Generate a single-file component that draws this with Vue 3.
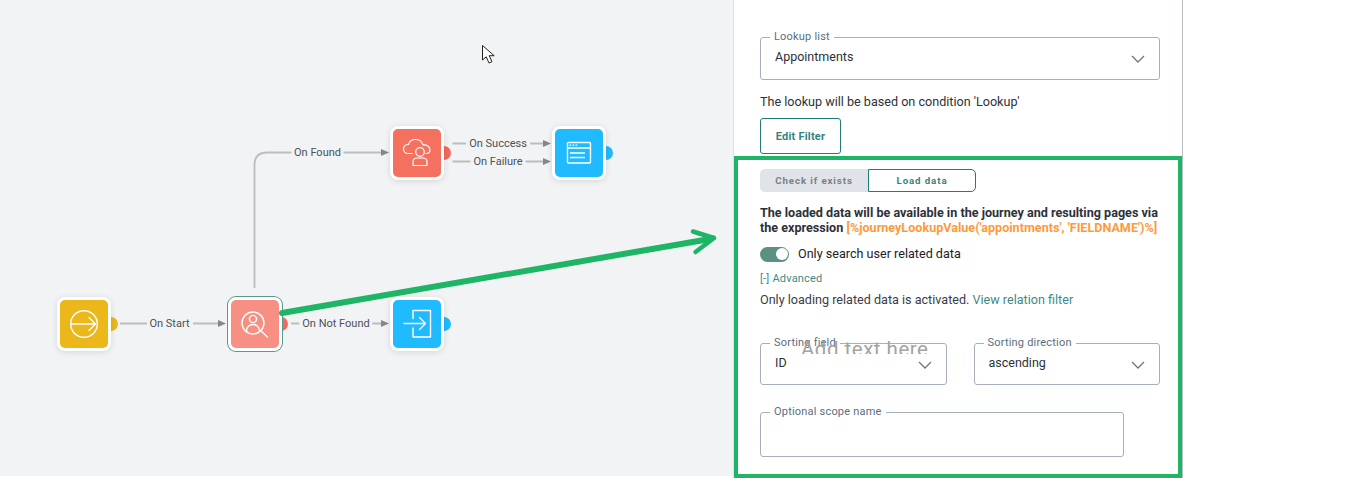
<script setup>
const nodes = [
  { id: 'start', x: 57, y: 297, color: '#ebb71b', dot: '#ebb71b' },
  { id: 'lookup', x: 228, y: 297, color: '#f78f82', dot: '#f4695c', selected: true },
  { id: 'notfound', x: 390, y: 297, color: '#1fbaff', dot: '#1fbaff' },
  { id: 'cloud', x: 390, y: 126, color: '#f4705f', dot: '#f4695c' },
  { id: 'page', x: 552, y: 126, color: '#1fbaff', dot: '#1fbaff' }
]
const labels = [
  { text: 'On Start', x: 169.5, y: 324 },
  { text: 'On Not Found', x: 336, y: 324 },
  { text: 'On Found', x: 317.5, y: 153 },
  { text: 'On Success', x: 498, y: 144 },
  { text: 'On Failure', x: 498, y: 162 }
]
</script>

<template>
  <div class="page">
    <div class="canvas">
      <svg class="wires" width="733" height="476" viewBox="0 0 733 476">
        <g fill="none" stroke="#bcbdbf" stroke-width="1.8">
          <path d="M120 323.500H219" />
          <path d="M254.500 288V165Q254.500 152.500 267 152.500H382" />
          <path d="M291 323.500H382" />
          <path d="M452.500 143.500H544" />
          <path d="M452.500 161.500H544" />
        </g>
        <g fill="#85878a">
          <path d="M218 320l8 3.500l-8 3.500z" />
          <path d="M381 320l8 3.500l-8 3.500z" />
          <path d="M381 149l8 3.500l-8 3.500z" />
          <path d="M543 140l8 3.500l-8 3.500z" />
          <path d="M543 158l8 3.500l-8 3.500z" />
        </g>
      </svg>

      <span
        v-for="l in labels"
        :key="l.text"
        class="wire-label"
        :style="{ left: l.x + 'px', top: l.y + 'px' }"
      >{{ l.text }}</span>

      <div
        v-for="n in nodes"
        :key="n.id"
        class="node"
        :class="{ selected: n.selected }"
        :style="{ left: n.x + 'px', top: n.y + 'px' }"
      >
        <i class="dot" :style="{ background: n.dot }"></i>
        <div class="tile" :style="{ background: n.color }">
          <svg v-if="n.id === 'start'" width="30" height="30" viewBox="0 0 30 30" fill="none" stroke="#fff" stroke-width="1.4" stroke-linecap="round" stroke-linejoin="round">
            <circle cx="15" cy="15" r="13.300" />
            <path d="M1.700 15H26.500M20 8.500l6.500 6.500l-6.500 6.500" />
          </svg>
          <svg v-else-if="n.id === 'lookup'" width="30" height="30" viewBox="0 0 30 30" fill="none" stroke="#fff" stroke-width="1.4" stroke-linecap="round" stroke-linejoin="round">
            <circle cx="13" cy="14" r="11" />
            <circle cx="13" cy="10" r="3.600" />
            <path d="M6.500 22c0-4 3-6.500 6.500-6.500s6.500 2.500 6.500 6.500M21 22L27.500 28" />
          </svg>
          <svg v-else-if="n.id === 'notfound'" width="30" height="30" viewBox="0 0 30 30" fill="none" stroke="#fff" stroke-width="1.4" stroke-linecap="round" stroke-linejoin="round">
            <path d="M11 9.500V1.500H28.500V28H11V19" />
            <path d="M2 14.500H23.500M17.500 8.500l6 6l-6 6" />
          </svg>
          <svg v-else-if="n.id === 'cloud'" width="30" height="30" viewBox="0 0 30 30" fill="none" stroke="#fff" stroke-width="1.2" stroke-linecap="round" stroke-linejoin="round">
            <path d="M10 15.500H6C3 15.500 1.500 13 1.500 11C1.500 8.500 3.500 6.500 6.500 6.500C7.500 3 10.500 1.500 13.500 1.500C17 1.500 20 3.500 21 7C24.500 6.500 28 8.500 28 12C28 14 26.500 15.500 24 15.500" />
            <circle cx="18" cy="14" r="4.300" />
            <path d="M11 27.500V24c0-2.500 2-4 4-4h6c2 0 4 1.500 4 4v3.500z" />
          </svg>
          <svg v-else width="26" height="26" viewBox="0 0 26 26" fill="none" stroke="#fff" stroke-width="1.4">
            <rect x="1.500" y="2.500" width="23" height="20.500" rx="1" />
            <path d="M1.500 8H24.500M4 13H19M4 17.500H19" />
            <path d="M3.500 5.300H5.200M6.500 5.300H8.200M9.500 5.300H11.200" />
          </svg>
        </div>
      </div>

      <svg class="cursor" width="16" height="22" viewBox="0 0 16 22">
        <path d="M1.500 1.500V16l3.700-3.200L8 19l3-1.300l-2.800-6h5z" fill="#fff" stroke="#222" stroke-width="1" stroke-linejoin="round" />
      </svg>
    </div>

    <aside class="panel">
      <div class="field lookup">
        <span class="legend">Lookup list</span>
        <span class="value">Appointments</span>
        <svg class="chev" width="14" height="8" viewBox="0 0 14 8" fill="none" stroke="#70757c" stroke-width="1.300"><path d="M1 1l6 6l6-6" /></svg>
      </div>

      <p class="info">The lookup will be based on condition 'Lookup'</p>
      <button class="edit">Edit Filter</button>

      <div class="segments">
        <span class="seg off">Check if exists</span>
        <span class="seg on">Load data</span>
      </div>

      <p class="notice">The loaded data will be available in the journey and resulting pages via the expression <span class="expr">[%journeyLookupValue('appointments', 'FIELDNAME')%]</span></p>

      <div class="switch-row">
        <span class="switch"><i></i></span>
        <span class="switch-text">Only search user related data</span>
      </div>

      <div class="advanced">[-] Advanced</div>
      <p class="activated">Only loading related data is activated. <span class="link">View relation filter</span></p>

      <div class="sort-row">
        <div class="field">
          <span class="legend">Sorting field</span>
          <span class="value">ID</span>
          <svg class="chev" width="14" height="8" viewBox="0 0 14 8" fill="none" stroke="#70757c" stroke-width="1.300"><path d="M1 1l6 6l6-6" /></svg>
          <span class="ghost">Add text here</span>
        </div>
        <div class="field">
          <span class="legend">Sorting direction</span>
          <span class="value">ascending</span>
          <svg class="chev" width="14" height="8" viewBox="0 0 14 8" fill="none" stroke="#70757c" stroke-width="1.300"><path d="M1 1l6 6l6-6" /></svg>
        </div>
      </div>

      <div class="field scope">
        <span class="legend">Optional scope name</span>
      </div>

      <div class="highlight"></div>
    </aside>

    <svg class="arrow" width="1365" height="478" viewBox="0 0 1365 478">
      <path d="M282 313L710 239" fill="none" stroke="#1eb566" stroke-width="6" stroke-linecap="round" />
      <path d="M714 238L693 231.500M714 238L695.500 252" fill="none" stroke="#1eb566" stroke-width="4.500" stroke-linecap="round" />
    </svg>
  </div>
</template>

<style>
html, body { margin: 0; background: #fff; }
</style>

<style scoped>
.page {
  position: relative;
  display: flex;
  align-items: flex-start;
  width: 1365px;
  height: 478px;
  overflow: hidden;
  font-family: Roboto, "Liberation Sans", sans-serif;
  color: #2e3138;
}
.canvas {
  position: relative;
  isolation: isolate;
  flex: none;
  width: 733px;
  height: 476px;
  background: #f2f3f5;
}
.wires { position: absolute; left: 0; top: 0; }
.wire-label {
  position: absolute;
  transform: translate(-50%, -50%);
  padding: 0 3px;
  background: #f2f3f5;
  font-size: 11px;
  line-height: 14px;
  color: #4b5058;
  white-space: nowrap;
}
.node {
  position: absolute;
  box-sizing: border-box;
  width: 54px;
  height: 54px;
  padding: 3px;
  background: #fff;
  border-radius: 8px;
  box-shadow: 0 1px 6px rgba(0, 0, 0, .13);
}
.node.selected {
  box-shadow: 0 0 0 1px #559a8f;
}
.tile {
  display: flex;
  align-items: center;
  justify-content: center;
  width: 100%;
  height: 100%;
  border-radius: 5px;
}
.dot {
  position: absolute;
  z-index: -1;
  right: -7px;
  top: 20px;
  width: 14px;
  height: 14px;
  border-radius: 50%;
}
.selected .dot { right: -6px; }
.cursor { position: absolute; left: 481px; top: 44px; }

.panel {
  position: relative;
  flex: none;
  box-sizing: border-box;
  width: 450px;
  height: 478px;
  padding: 37px 22px 0 26px;
  background: #fff;
  border-left: 1px solid #dfe1e4;
  border-right: 1px solid #b9bcc1;
}
.field {
  position: relative;
  box-sizing: border-box;
  display: flex;
  align-items: center;
  height: 43px;
  padding: 0 14px 4px;
  border: 1px solid #a9afb9;
  border-radius: 3px;
}
.legend {
  position: absolute;
  left: 9px;
  top: -8px;
  padding: 0 4px;
  background: #fff;
  font-size: 11px;
  line-height: 14px;
  letter-spacing: .2px;
  color: #5b6e7c;
  white-space: nowrap;
}
.value { font-size: 12.500px; color: #2e3138; }
.chev { position: absolute; right: 14px; top: 17px; }
.lookup { margin-bottom: 14px; }
.info {
  margin: 0;
  font-size: 12.600px;
  line-height: 15px;
  color: #2e3138;
}
.edit {
  display: block;
  box-sizing: border-box;
  width: 81px;
  height: 36px;
  margin: 9px 0 15px;
  padding: 0;
  background: #fff;
  border: 1px solid #1f7d71;
  border-radius: 3px;
  font: 700 11px Roboto, sans-serif;
  letter-spacing: .2px;
  color: #37837c;
}
.segments {
  display: flex;
  width: 216px;
  height: 23px;
  background: #e0e3e7;
  border-radius: 5px;
  font-size: 9.700px;
  font-weight: 700;
  letter-spacing: .9px;
}
.seg {
  display: flex;
  align-items: center;
  justify-content: center;
  box-sizing: border-box;
  width: 108px;
}
.off { color: #7a8087; }
.on {
  background: #fff;
  border: 1px solid #1f7d71;
  border-radius: 0 5px 5px 0;
  color: #37837c;
}
.notice {
  margin: 13px 0 0;
  font-size: 12.600px;
  font-weight: 700;
  line-height: 15px;
  color: #2e3138;
}
.expr { color: #ff9a3c; }
.switch-row {
  display: flex;
  align-items: center;
  gap: 9px;
  height: 16px;
  margin-top: 11px;
}
.switch {
  position: relative;
  width: 29px;
  height: 15px;
  border-radius: 8px;
  background: #5a9183;
}
.switch i {
  position: absolute;
  right: 1.500px;
  top: 1.500px;
  width: 12px;
  height: 12px;
  border-radius: 50%;
  background: #fff;
}
.switch-text {
  margin-top: -2px;
  font-size: 12.600px;
  color: #1e2126;
}
.advanced {
  margin-top: 10px;
  font-size: 11px;
  line-height: 14px;
  letter-spacing: .2px;
  color: #3f8a85;
}
.activated {
  margin: 6px 0 0;
  font-size: 12.600px;
  line-height: 15px;
  color: #3a3d44;
}
.link { color: #3f8a85; }
.sort-row {
  display: flex;
  gap: 27px;
  margin-top: 36px;
}
.sort-row .field { flex: 1; height: 42px; }
.ghost {
  position: absolute;
  left: 40px;
  top: -7px;
  font-family: Roboto, sans-serif;
  font-size: 20.500px;
  font-weight: 400;
  line-height: 24px;
  letter-spacing: .5px;
  color: #a3a3a3;
  white-space: nowrap;
  clip-path: inset(0 0 7px 0);
}
.scope { width: 364px; height: 45px; margin-top: 27px; }
.highlight {
  position: absolute;
  left: 0;
  top: 156px;
  right: 0;
  bottom: 0;
  border: 4px solid #1eb566;
  box-sizing: border-box;
  pointer-events: none;
}
.arrow { position: absolute; left: 0; top: 0; pointer-events: none; }
</style>
